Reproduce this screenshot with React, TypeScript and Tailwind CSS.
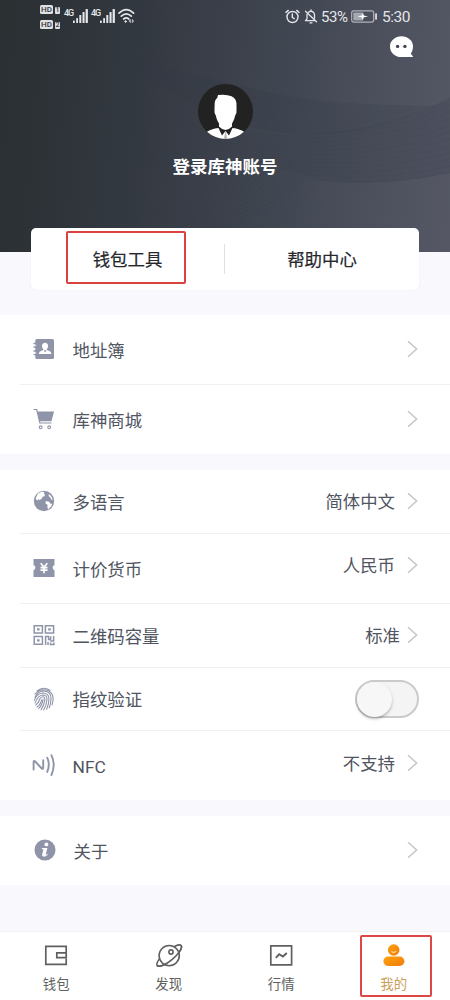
import type { ReactNode } from 'react';

const CJK = "font-['Roboto','Noto_Sans_CJK_SC',sans-serif]";

function Signal() {
  return (
    <div className="flex items-start">
      <span className="block w-[9px] font-['Roboto',sans-serif] text-[9px] leading-[9px] font-medium tracking-[-1.2px] text-[#e4e6ea]">4G</span>
      <svg className="block h-[14px] w-[15px]" viewBox="0 0 15 14" fill="#e4e6ea">
        <rect x="0" y="11.5" width="1.8" height="2.5" rx=".6" />
        <rect x="3.2" y="9" width="1.8" height="5" rx=".6" />
        <rect x="6.3" y="6" width="2" height="8" rx=".6" />
        <rect x="9.5" y="3" width="2.1" height="11" rx=".6" />
        <rect x="12.6" y="0" width="2.3" height="14" rx=".6" />
      </svg>
    </div>
  );
}

function Hd({ n }: { n: string }) {
  return (
    <div className="flex h-[9px] items-end gap-[2px] font-['Roboto',sans-serif]">
      <span className="flex h-[9px] w-[13px] items-center justify-center rounded-[1.5px] bg-[#dfe1e5] text-[8px] leading-[9px] font-medium text-[#30363c]">HD</span>
      <span className="flex h-[7px] w-[5px] items-center justify-center rounded-[1px] bg-[#dfe1e5] text-[7px] leading-[7px] font-medium text-[#30363c]">{n}</span>
    </div>
  );
}

function StatusBar() {
  return (
    <div className="flex h-[33px] justify-between pr-[40px] pl-[40px]">
      <div className="flex">
        <div className="flex flex-col gap-[6px] pt-[5px]">
          <Hd n="1" />
          <Hd n="2" />
        </div>
        <div className="ml-[4px] flex gap-[3px] pt-[9px]">
          <Signal />
          <Signal />
        </div>
        <svg className="mt-[8px] ml-[3px] h-[16px] w-[17px]" viewBox="0 0 17 16" fill="none" stroke="#e4e6ea" strokeWidth="1.7" strokeLinecap="round">
          <path d="M1 5.2Q8.3-1.8 15.6 5.2M3.3 8.2Q8.3 3.6 13.3 8.2M5.7 11Q8.2 8.8 10.8 11" />
          <circle cx="7.6" cy="13.5" r=".8" fill="#e4e6ea" strokeWidth="1" />
          <path d="M12.3 11.6l-1.3 1.5 1.3 1.5zM14.4 11.6l1.3 1.5-1.3 1.5z" fill="#e4e6ea" strokeWidth=".4" />
        </svg>
      </div>
      <div className="flex h-[33px] items-center text-[#e4e6ea]">
        <svg className="h-[15px] w-[15px]" viewBox="0 0 15 15" fill="none" stroke="currentColor" strokeWidth="1.4" strokeLinecap="round">
          <circle cx="7.5" cy="8" r="5.5" />
          <path d="M7.3 5v3.3l2 1.4M1 3.4l2.3-2M14 3.4l-2.3-2" />
        </svg>
        <svg className="ml-[4px] h-[15px] w-[14px]" viewBox="0 0 14 15" fill="none" stroke="currentColor" strokeWidth="1.3" strokeLinecap="round" strokeLinejoin="round">
          <path d="M1.5 2.2l11 10.6M4.5 3.2Q7 1.3 9.4 3.2Q10.5 4.2 10.5 6v3.2M3 5.5v4.3L1.5 11.7h9M7 .9v1M6 13.8h2" />
        </svg>
        <span className="ml-[3px] w-[29px] font-['Roboto',sans-serif] text-[15px] leading-[18px] tracking-[-0.45px]">53%</span>
        <svg className="ml-[1px] h-[13px] w-[27px]" viewBox="0 0 27 13">
          <rect x=".7" y=".9" width="22" height="11.2" rx="2" fill="none" stroke="#afb2ba" strokeWidth="1.2" />
          <rect x="2.3" y="2.4" width="10" height="8.2" rx=".8" fill="#a4a8b1" />
          <path d="M6.5 6.5l4.2-.9 1-2.4 1.2 2.4 4.2.9-4.2.8-1.2 2.5-1-2.5z" fill="#fff" />
          <rect x="24.2" y="3.2" width="1.7" height="6.6" rx=".7" fill="#e4e6ea" />
        </svg>
        <span className="ml-[4px] w-[28px] font-['Roboto',sans-serif] text-[15.5px] leading-[18px] tracking-[-0.45px] whitespace-nowrap">5:30</span>
      </div>
    </div>
  );
}

const offsets = [0, 1, 2, 3, 4, 5, 6, 7, 8, 9, 10, 11];

function Waves() {
  return (
    <svg className="absolute inset-0 h-[252px] w-[450px]" viewBox="0 0 450 252" fill="none">
      <defs>
        <linearGradient id="ribbon" gradientUnits="userSpaceOnUse" x1="180" y1="0" x2="330" y2="0">
          <stop stopColor="#333846" stopOpacity="0" />
          <stop offset="1" stopColor="#333846" stopOpacity=".22" />
        </linearGradient>
      </defs>
      <path d="M110 57C170 65 210 80 260 91C320 104 365 105 435 106C380 130 325 141 265 130C205 119 170 84 110 57Z" fill="#343947" fillOpacity=".16" />
      <path d="M450 98C405 122 350 136 275 134C240 133 215 125 180 135C220 150 260 162 300 174C340 189 400 183 450 173Z" fill="url(#ribbon)" />
      <g stroke="#2e3440" strokeWidth=".5">
        {offsets.map((n) => (
          <path key={n} d={`M${145 + n * 5} ${213 + n * 2}Q${230 + n * 4} ${195 + n * 2} ${270 + n * 3} ${137 + n * 3.8}`} strokeOpacity=".26" />
        ))}
        {offsets.map((n) => (
          <path key={n} d={`M${275 + n} ${135 + n * 3.5}C335 ${137 + n * 4.5} 400 ${123 + n * 5.4} 450 ${98 + n * 6.8}`} strokeOpacity=".14" />
        ))}
        {offsets.map((n) => (
          <path key={n} d={`M${225 + n * 3} ${84 + n * 4}Q320 ${106 + n * 3} ${430 - n * 6} ${107 + n * 1.4}`} strokeOpacity=".07" />
        ))}
      </g>
    </svg>
  );
}

function Chevron() {
  return (
    <svg className="-mt-px h-[18px] w-[11px]" viewBox="0 0 11 18" fill="none" stroke="#c4c5c9" strokeWidth="1.5">
      <path d="M1 1.3l8.6 7.7L1 16.7" />
    </svg>
  );
}

const icon = 'block h-[22px] w-[22px] text-[#8f94a8]';

const Book = () => (
  <svg className={icon} viewBox="0 0 22 22" fill="currentColor">
    <rect x="2.3" y="1" width="18.7" height="20" rx="1.6" />
    <path d="M1 5.5h3M1 9h3M1 13h3M1 16.6h3" stroke="currentColor" strokeWidth="1.4" strokeLinecap="round" />
    <circle cx="2.9" cy="7.2" r=".5" fill="#fff" /><circle cx="2.9" cy="14.8" r=".5" fill="#fff" />
    <path d="M12 4.8c2.1 0 3.1 1.5 3.1 3.3 0 1.5-.7 2.6-1.6 3.2 0 1.5 4.6 1.1 4.9 4.6H5.9c.3-3.5 4.7-3.1 4.7-4.6-.9-.6-1.6-1.7-1.6-3.2 0-1.8 1-3.3 3-3.3z" fill="#fff" />
    <path d="M10.7 12.2l1.4 2.2 1.4-2.2z" fill="currentColor" />
  </svg>
);
const Cart = () => (
  <svg className={icon} viewBox="0 0 22 22" fill="none" stroke="currentColor">
    <path d="M.5 1.5h3.2l3.2 13.5h11.6" strokeWidth="1.2" />
    <path d="M4.4 3.4h16.7l-2.7 9.8H6.4z" fill="currentColor" stroke="none" />
    <circle cx="7.7" cy="19.3" r="1.4" strokeWidth="1.1" /><circle cx="16.2" cy="19.3" r="1.4" strokeWidth="1.1" />
  </svg>
);
const Globe = () => (
  <svg className={icon} viewBox="0 0 22 22">
    <circle cx="11" cy="11" r="10.2" fill="currentColor" />
    <path d="M5 3.4L8.5 1.7l3 .2-.8 1.6 1.2.9-.4 1.8-2 .6-.7 2-2.3 1.2-1.3-.7-.7 1.1-1.1-.7-.7-1.4zM12.6 11.3l3 .1 1.9 2.1 1.6.5-1 2.5-1.7 1.4-1.2 1.5-.9-2.3.4-2-2.1-1.7zM15.6 4.2l1.4.5 2.1 3 .6 2.5-1.4-.6-1-2.1-1.5-1.2z" fill="#fff" />
  </svg>
);
const Ticket = () => (
  <svg className={icon} viewBox="0 0 22 22">
    <path d="M.5 2h21v5.9a2.8 2.8 0 000 5.3v6.8H.5v-6.8a2.8 2.8 0 000-5.3z" fill="currentColor" />
    <path d="M7.7 6.2l3.3 4 3.3-4M7.5 10.7h7M7.5 13.2h7M11 10.2v6" fill="none" stroke="#fff" strokeWidth="1.7" />
  </svg>
);
const Qr = () => (
  <svg className={icon} viewBox="0 0 22 22" fill="none" stroke="currentColor" strokeWidth="1.5">
    <path d="M1.2 1.7h8.2v7.4H1.2zM12.4 1.7h8.2v7.4h-8.2zM1.2 12.5h8.2v7.8H1.2z" />
    <path d="M4 4.3h2.6v2.2H4zM15.2 4.3h2.6v2.2h-2.6zM4 15.2h2.6v2.3H4z" fill="currentColor" stroke="none" />
    <path d="M12.6 21v-8.5h3v3h2v-3.3M20.6 12v5h-3.3M15 18v3M17.5 18.5v2h3.4v-2" />
  </svg>
);
const Finger = () => (
  <svg className="block h-[24px] w-[22px] text-[#8f94a8]" viewBox="0 0 22 24" fill="none" stroke="currentColor" strokeWidth="1.1" strokeLinecap="round">
    <path d="M4 4Q10-1 17 3.2M2 7.2Q8 .2 15.8 4.1Q20.7 6.8 20 13.5L19 18M2 10.2Q5 4.2 10 4Q18.5 4 18 12.5Q17.7 17 16.2 20.8M1.4 13.3Q3.6 6.5 9.7 6Q16.1 6 16 12.1Q15.8 17.2 13.7 22.2M2.1 15.9Q4.9 8.3 9.8 8Q14.2 8 14 12.5Q13.5 18.4 10.7 23M2.8 18.1Q5.8 15.7 6.7 12Q8 9.6 10.2 9.8Q12.4 10.3 11.7 13.7Q10.7 19.3 8.1 22.7M4 20.1Q8 17.1 8.6 12.8M5.8 21.4Q9.2 18.4 10.1 12.4" />
  </svg>
);
const Nfc = () => (
  <svg className="block h-[24px] w-[24px] text-[#8f94a8]" viewBox="0 0 24 24" fill="none" stroke="currentColor" strokeWidth="1.9" strokeLinecap="round" strokeLinejoin="round">
    <path d="M1.6 16.5V9.2Q1.6 7 3.2 8.5L9.3 15Q11.2 17 11.2 14.5V7.3M15.2 4.7q3.2 7 0 14.2M19.4 2.2q4.6 9.8 0 19.8" />
  </svg>
);
const Info = () => (
  <svg className={icon} viewBox="0 0 22 22">
    <circle cx="11" cy="11" r="10.5" fill="currentColor" />
    <circle cx="12.4" cy="5.4" r="1.9" fill="#fff" />
    <path d="M7.9 8.9h5.5l-1.7 6.7q.6.2 1.7-.8l.4.6q-2.1 2.6-4.5 2.2-1.7-.3-1.1-2.3l1.3-4.9-1.8-.3z" fill="#fff" />
  </svg>
);

type RowProps = { glyph: ReactNode; label: string; value?: string; height: string; last?: boolean; valueGap?: string; endShift?: string; indented?: boolean; toggle?: boolean };

function Row({ glyph, label, value, height, last, valueGap = 'mr-[12px]', endShift = '', indented, toggle }: RowProps) {
  return (
    <div className={`ml-[20px] flex items-center pr-[32px] ${height} ${last ? '' : 'border-b border-[#eff0f3]'}`}>
      <div className={`flex w-[24px] justify-center pb-px ${indented ? 'ml-[12.5px]' : 'ml-[11.5px]'}`}>{glyph}</div>
      <span className="ml-[17px] pt-[2px] text-[17.4px] leading-[26px] text-[#50555f]">{label}</span>
      <div className={`ml-auto flex items-center ${endShift}`}>
        {value && <span className={`pt-px text-[17.4px] leading-[26px] text-[#50555f] ${valueGap}`}>{value}</span>}
        {toggle ? (
          <button aria-label={label} className="-mr-[1px] flex h-[38px] w-[64px] items-center rounded-full border-2 border-[#cbcbcb] bg-[#f4f4f4]">
            <span className="block h-[35px] w-[35px] rounded-full bg-[#f7f7f7] shadow-[0_2px_3px_rgba(0,0,0,.25)]" />
          </button>
        ) : <Chevron />}
      </div>
    </div>
  );
}

function Header() {
  return (
    <header className="relative h-[252px] bg-[linear-gradient(95deg,#2a2f32_0%,#2f353b_20%,#393e48_45%,#424853_65%,#4d515e_84%,#555765_100%)]">
      <Waves />
      <div className="relative flex flex-col">
        <StatusBar />
        <svg className="mt-[3px] mr-[36px] h-[22px] w-[25px] self-end" viewBox="0 0 25 22">
          <path d="M12.5.2C18.8.2 24 4.6 24 10.1c0 3-.7 5.7-2.2 7.4l2.5 3.5H12.2C5.8 21 1 16.3 1 10.4S6.2.2 12.5.2z" fill="#fff" />
          <circle cx="8.6" cy="10.4" r="1.7" fill="#3f4450" /><circle cx="15.9" cy="10.4" r="1.7" fill="#3f4450" />
        </svg>
        <svg className="mt-[26px] h-[55px] w-[55px] self-center" viewBox="0 0 55 55">
          <circle cx="27.5" cy="27.5" r="27.5" fill="#222222" />
          <path d="M9 47.8Q13 45 20.5 44L24 51.5 27.5 47 31 51.5 34.5 44Q42 45 46 47.8A27.5 27.5 0 019 47.8z" fill="#fff" />
          <path d="M27.2 48h.8l1.3 7h-3.4z" fill="#b9babd" />
          <path d="M20 11q8.5-1 13.5 1.3 5.5 2.2 5 10l0 4q.5 3.5-1.5 5.8c-.5 3.4-2 5.6-3 7.4v3q-3 3.4-6.5 3.4t-6.5-3.4v-3c-1.4-2-2.5-4.4-3-7.4q-2-2.4-1.5-5.8l.1-4q-.3-6.5 2.6-8.2z" fill="#fff" />
        </svg>
        <h1 className="mt-[15px] text-center text-[17.5px] leading-[26px] font-bold text-white">登录库神账号</h1>
      </div>
    </header>
  );
}

const tabClass = 'flex w-[112.5px] flex-col items-center pt-[11px]';
const tabText = 'mt-[5.5px] text-[13.4px] leading-[20px]';

function Nav() {
  return (
    <nav className="mt-auto flex h-[69px] border-t border-[#f1f1f4] bg-white text-[#606060]">
      <div className={tabClass}>
        <svg className="h-[26px] w-[26px]" viewBox="0 0 26 26" fill="none" stroke="currentColor" strokeWidth="1.7"><path d="M23.2 9V3.3H2.8v18h20.4v-5.6M13.8 9.8h9.4v4.9h-9.4z" /></svg>
        <span className={tabText}>钱包</span>
      </div>
      <div className={tabClass}>
        <svg className="h-[26px] w-[28px] overflow-visible" viewBox="0 0 28 26" fill="none" stroke="currentColor" strokeWidth="1.6">
          <ellipse cx="14.2" cy="12.6" rx="15.6" ry="4.8" transform="rotate(-40 14.2 12.6)" />
          <circle cx="14.2" cy="12.6" r="10.1" fill="#fff" />
          <path d="M-15.6 0A15.6 4.8 0 0015.6 0" transform="translate(14.2 12.6) rotate(-40)" />
          <circle cx="16" cy="9" r="2.1" />
        </svg>
        <span className={tabText}>发现</span>
      </div>
      <div className={tabClass}>
        <svg className="h-[26px] w-[26px]" viewBox="0 0 26 26" fill="none" stroke="currentColor" strokeWidth="1.7"><path d="M2.8 2.8h20.8v19H2.8z" /><path d="M7.8 14.8l3.4-3.5 3.7 2.2 3.9-3.5" strokeWidth="1.9" /></svg>
        <span className={tabText}>行情</span>
      </div>
      <div className="relative flex w-[112.5px] flex-col items-center pt-[11px] text-[#c9a15c]">
        <svg className="h-[26px] w-[26px]" viewBox="0 0 26 26">
          <defs><linearGradient id="person" x1="0" y1="0" x2="1" y2="1"><stop stopColor="#ffa20a" /><stop offset="1" stopColor="#ee7d0e" /></linearGradient></defs>
          <circle cx="12.7" cy="7" r="5.8" fill="url(#person)" /><rect x="2.4" y="13.5" width="21" height="9.4" rx="4.7" fill="url(#person)" />
          <path d="M10.7 8.9q2.3 1.5 4.3-.3" fill="none" stroke="#fff0ca" strokeWidth="1" strokeLinecap="round" />
        </svg>
        <span className={tabText}>我的</span>
        <div className="absolute top-[3px] left-[22px] h-[62px] w-[72.5px] rounded-[2px] border-2 border-[#dc4845]" />
      </div>
    </nav>
  );
}

export default function App() {
  return (
    <main className={`flex h-[1000px] w-[450px] flex-col overflow-hidden bg-[#f8f8fd] ${CJK}`}>
      <Header />
      <section className="relative mx-[31px] -mt-[24px] flex h-[62px] shrink-0 items-center rounded-[5px] bg-white text-[17.4px] leading-[26px] text-[#26282d] shadow-[0_0_1px_rgba(40,40,70,.15)] [-webkit-text-stroke:0.2px_#26282d]">
        <div className="-mt-[3px] ml-[35px] flex h-[53px] w-[120px] items-center justify-center rounded-[2px] border-2 border-[#d9423f] pt-[4px] pl-[3px]">钱包工具</div>
        <div className="ml-[38px] h-[30px] w-px bg-[#dedfe3]" />
        <div className="flex flex-1 justify-center pt-[2px]">帮助中心</div>
      </section>
      <section className="mt-[25px] bg-white">
        <Row glyph={<Book />} label="地址簿" height="h-[70px]" />
        <Row glyph={<Cart />} label="库神商城" height="h-[69px]" last />
      </section>
      <section className="mt-[16px] bg-white">
        <Row glyph={<Globe />} label="多语言" value="简体中文" height="h-[64px]" />
        <Row glyph={<Ticket />} label="计价货币" value="人民币" height="h-[70px]" endShift="-mt-[6px]" />
        <Row glyph={<Qr />} label="二维码容量" value="标准" height="h-[64px]" valueGap="mr-[7px]" />
        <Row glyph={<Finger />} label="指纹验证" height="h-[63px]" toggle />
        <Row glyph={<Nfc />} label="NFC" value="不支持" height="h-[69px]" last endShift="-mt-[5px]" />
      </section>
      <section className="mt-[16px] bg-white">
        <Row glyph={<Info />} label="关于" height="h-[69px]" last indented />
      </section>
      <Nav />
    </main>
  );
}
